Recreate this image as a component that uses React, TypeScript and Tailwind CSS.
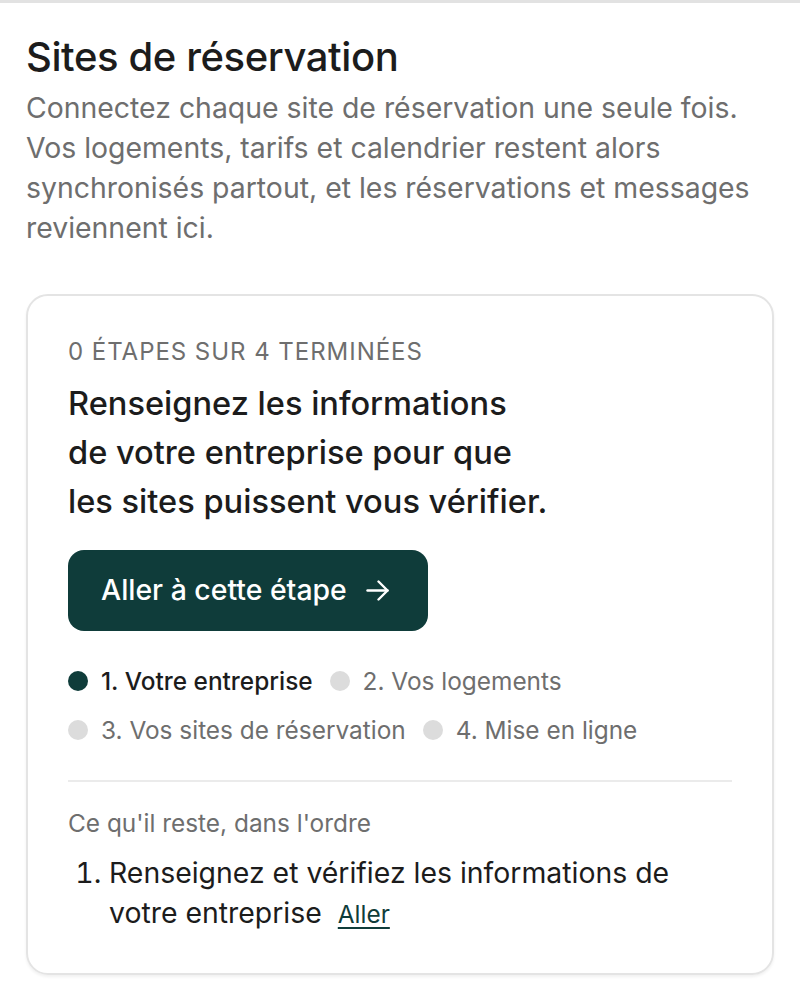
const STEPS = [
  { label: '1. Votre entreprise', active: true },
  { label: '2. Vos logements', active: false },
  { label: '3. Vos sites de réservation', active: false },
  { label: '4. Mise en ligne', active: false },
]

export default function App() {
  return (
    <div
      className="min-h-screen bg-white border-t-[3px] border-[#e2e2e2] px-[26px] pt-[30px]"
      style={{ fontFamily: 'Inter, "Noto Sans", sans-serif' }}
    >
      <h1 className="text-[40px] leading-[48px] font-medium tracking-[-0.01em] text-[#1c1c1c]">
        Sites de réservation
      </h1>
      <p className="mt-[7px] text-[28.4px] leading-[40px] text-[#6e6e6e]">
        Connectez chaque site de réservation une seule fois. Vos logements, tarifs et calendrier restent alors
        synchronisés partout, et les réservations et messages reviennent ici.
      </p>

      <div className="mt-[46px] rounded-[22px] border-2 border-[#e4e4e4] shadow-[0_2px_3px_rgba(0,0,0,0.06)] px-[40px] pt-[40px] pb-[40px]">
        <div className="text-[24px] leading-[32px] uppercase tracking-[0.04em] text-[#6e6e6e]">
          0 étapes sur 4 terminées
        </div>
        <h2 className="mt-[11px] text-[32.6px] leading-[49px] font-medium text-[#1c1c1c]">
          Renseignez les informations
          <br />
          de votre entreprise pour que
          <br />
          les sites puissent vous vérifier.
        </h2>

        <button
          type="button"
          className="mt-[24px] flex items-center gap-[19px] h-[81px] pl-[33px] pr-[39px] rounded-[16px] bg-[#0f3c3a] text-white text-[28.4px] font-medium"
        >
          Aller à cette étape
          <svg width="23" height="21" viewBox="0 0 23 21" fill="none" stroke="currentColor" strokeWidth="2.4" strokeLinecap="round" strokeLinejoin="round">
            <path d="M1.5 10.5h20" />
            <path d="M12.5 1.5l9 9-9 9" />
          </svg>
        </button>

        <div className="mt-[32px] flex flex-wrap gap-x-[17px] gap-y-[13px]">
          {STEPS.map((s) => (
            <div key={s.label} className="flex items-center gap-[13px]">
              <span className={`w-[20px] h-[20px] rounded-full ${s.active ? 'bg-[#0f3c3a]' : 'bg-[#dcdcdc]'}`} />
              <span className={`text-[24.4px] leading-[36px] ${s.active ? 'text-[#1c1c1c] font-medium' : 'text-[#6e6e6e]'}`}>
                {s.label}
              </span>
            </div>
          ))}
        </div>

        <div className="mt-[32px] border-t-2 border-[#ebebeb]" />

        <div className="mt-[25px] text-[24.4px] leading-[32px] text-[#6e6e6e]">Ce qu'il reste, dans l'ordre</div>
        <ol className="mt-[14px] list-decimal pl-[41px] text-[28.4px] leading-[40px] text-[#1c1c1c]">
          <li>
            Renseignez et vérifiez les informations de votre entreprise
            <a
              href="#"
              className="ml-[16px] inline-block text-[24.4px] leading-[32px] text-[#0f3c3a] underline underline-offset-[4px]"
            >
              Aller
            </a>
          </li>
        </ol>
      </div>
    </div>
  )
}
